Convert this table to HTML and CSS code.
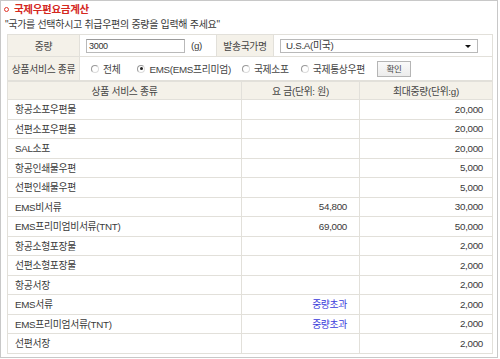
FILE: index.html
```html
<!DOCTYPE html>
<html lang="ko">
<head>
<meta charset="utf-8">
<link rel="stylesheet" href="styles.css">
</head>
<body>
<div class="panel">
  <h1 class="title"><span class="bullet"></span>국제우편요금계산</h1>
  <p class="guide">"국가를 선택하시고 취급우편의 중량을 입력해 주세요"</p>
  <table class="form">
    <colgroup><col class="c-label"><col class="c-weight"><col class="c-label2"><col></colgroup>
    <tr class="r1">
      <th>중량</th>
      <td><span class="input">3000</span><span class="unit">(g)</span></td>
      <th class="th2">발송국가명</th>
      <td><span class="select">U.S.A(미국)<span class="arrow"></span></span></td>
    </tr>
    <tr class="r2">
      <th>상품서비스 종류</th>
      <td colspan="3">
        <div class="radios">
          <span class="opt o1"><span class="radio"></span>전체</span>
          <span class="opt o2"><span class="radio on"></span>EMS(EMS프리미엄)</span>
          <span class="opt o3"><span class="radio"></span>국제소포</span>
          <span class="opt o4"><span class="radio"></span>국제통상우편</span>
          <span class="btn">확인</span>
        </div>
      </td>
    </tr>
  </table>
  <table class="data">
    <colgroup><col class="d1"><col class="d2"><col></colgroup>
    <thead>
      <tr><th>상품 서비스 종류</th><th>요 금(단위: 원)</th><th>최대중량(단위:g)</th></tr>
    </thead>
    <tbody>
      <tr><td>항공소포우편물</td><td></td><td>20,000</td></tr>
      <tr><td>선편소포우편물</td><td></td><td>20,000</td></tr>
      <tr><td>SAL소포</td><td></td><td>20,000</td></tr>
      <tr><td>항공인쇄물우편</td><td></td><td>5,000</td></tr>
      <tr><td>선편인쇄물우편</td><td></td><td>5,000</td></tr>
      <tr><td>EMS비서류</td><td>54,800</td><td>30,000</td></tr>
      <tr><td>EMS프리미엄비서류(TNT)</td><td>69,000</td><td>50,000</td></tr>
      <tr><td>항공소형포장물</td><td></td><td>2,000</td></tr>
      <tr><td>선편소형포장물</td><td></td><td>2,000</td></tr>
      <tr><td>항공서장</td><td></td><td>2,000</td></tr>
      <tr><td>EMS서류</td><td class="over">중량초과</td><td>2,000</td></tr>
      <tr><td>EMS프리미엄서류(TNT)</td><td class="over">중량초과</td><td>2,000</td></tr>
      <tr><td>선편서장</td><td></td><td>2,000</td></tr>
    </tbody>
  </table>
</div>
</body>
</html>
```

FILE: styles.css
```css
* { box-sizing: border-box; }
html, body { margin: 0; padding: 0; background: #fff; }
body {
  font-family: "Liberation Sans", "Noto Sans CJK KR", sans-serif;
  font-size: 9.8px;
  color: #444;
  letter-spacing: -0.3px;
}
.panel {
  width: 498px;
  height: 358px;
  border: 1px solid #c8c8c8;
  padding: 0 0 0 6px;
}
.title {
  margin: 0;
  height: 17px;
  padding: 2px 0 0 7px;
  font-size: 10.5px;
  font-weight: bold;
  color: #d4281e;
  position: relative;
  line-height: 13px;
}
.bullet {
  position: absolute;
  left: -3px;
  top: 6px;
  width: 5px;
  height: 5px;
  border: 1.5px solid #e0352a;
  border-radius: 50%;
}
.guide {
  margin: 0 0 0 -2px;
  height: 16px;
  line-height: 14px;
  color: #3a3a3a;
  font-size: 10px;
}
table { border-collapse: collapse; width: 486px; table-layout: fixed; }
.form th, .form td, .data th, .data td { border: 1px solid #e2e0da; padding: 0; }
.form th { background: #f4f1e9; font-weight: normal; color: #444; text-align: center; }
.c-label { width: 72px; }
.c-weight { width: 137px; }
.c-label2 { width: 57px; }
.form .r1 { height: 22px; }
.form .r2 { height: 24px; }
.form td { padding-left: 6px; }
.input {
  display: inline-block;
  vertical-align: middle;
  width: 99px;
  height: 14px;
  border: 1px solid #b9b9b9;
  border-top-color: #9a9a9a;
  line-height: 12px;
  padding-left: 2px;
  color: #333;
  font-size: 9px;
}
.unit { display: inline-block; vertical-align: middle; margin-left: 6px; color: #3a3a3a; }
.select {
  position: relative;
  display: block;
  width: 198px;
  height: 14px;
  border: 1px solid #b9b9b9;
  line-height: 12px;
  padding-left: 5px;
  color: #3a3a3a;
}
.arrow {
  position: absolute;
  right: 6px;
  top: 5px;
  border-left: 3px solid transparent;
  border-right: 3px solid transparent;
  border-top: 3px solid #111;
}
.radios { display: flex; align-items: center; height: 22px; }
.opt { display: inline-flex; align-items: center; }
.radio {
  display: inline-block;
  width: 8px;
  height: 8px;
  border-radius: 50%;
  border: 1px solid #9a9a9a;
  border-right-color: #dcdcdc;
  border-bottom-color: #dcdcdc;
  margin-right: 4px;
  position: relative;
}
.radio.on::after {
  content: "";
  position: absolute;
  left: 1.5px;
  top: 1.5px;
  width: 3px;
  height: 3px;
  border-radius: 50%;
  background: #222;
}
.o1 { margin-left: 5px; }
.o2 { margin-left: 17px; }
.o3 { margin-left: 11px; }
.o4 { margin-left: 12px; }
.btn {
  margin-left: 12px;
  display: inline-block;
  width: 34px;
  height: 16px;
  line-height: 14px;
  text-align: center;
  border: 1px solid #b5b5b5;
  background: linear-gradient(#fafafa, #ececec);
  font-size: 8.5px;
  color: #444;
}
.d1 { width: 234px; }
.d2 { width: 118px; }
.data thead tr { height: 18px; }
.data th { background: #f4f1e9; font-weight: normal; color: #444; }
.data tbody tr { height: 19.5px; }
.data td { text-align: right; padding-right: 10px; color: #3a3a3a; }
.data td:first-child { text-align: left; padding-left: 7px; }
.data td:nth-child(2) { padding-right: 12px; }
.data td:last-child { padding-right: 9px; }
.data td.over { color: #3b3bdb; }
```
